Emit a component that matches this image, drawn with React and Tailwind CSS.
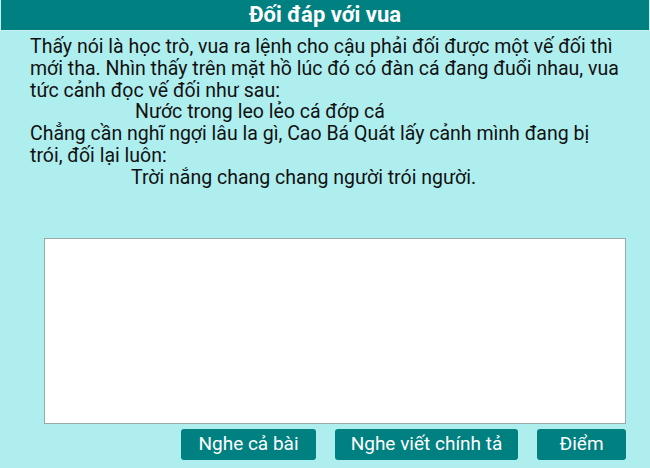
export default function App() {
  return (
    <div className="w-[650px] h-[468px] bg-[#afeeee] font-['Roboto',sans-serif] overflow-hidden">
      <div className="h-[31px] bg-[#008080] border-x border-b border-[#c8f0f0] flex items-center justify-center">
        <h1 className="text-white font-bold text-[22px] leading-none">Đối đáp với vua</h1>
      </div>

      <div className="pl-[30px] pr-[30px] pt-[5px] text-[19.5px] leading-[21.8px] text-[#111]">
        <p>
          Thấy nói là học trò, vua ra lệnh cho cậu phải đối được một vế đối thì mới tha. Nhìn thấy trên mặt hồ lúc đó có đàn cá đang đuổi nhau, vua tức cảnh đọc vế đối như sau:
        </p>
        <p className="pl-[105px]">Nước trong leo lẻo cá đớp cá</p>
        <p>
          Chẳng cần nghĩ ngợi lâu la gì, Cao Bá Quát lấy cảnh mình đang bị trói, đối lại luôn:
        </p>
        <p className="pl-[101px]">Trời nắng chang chang người trói người.</p>
      </div>

      <div className="ml-[44px] mt-[49px] w-[582px]">
        <textarea className="block w-full h-[186px] bg-white border border-[#9aa] resize-none outline-none" />
        <div className="flex justify-end gap-[19px] mt-[5px]">
          <button className="h-[31px] w-[135px] bg-[#008080] text-white text-[19px] rounded-[3px]">Nghe cả bài</button>
          <button className="h-[31px] w-[183px] bg-[#008080] text-white text-[19px] rounded-[3px]">Nghe viết chính tả</button>
          <button className="h-[31px] w-[89px] bg-[#008080] text-white text-[19px] rounded-[3px]">Điểm</button>
        </div>
      </div>
    </div>
  );
}
